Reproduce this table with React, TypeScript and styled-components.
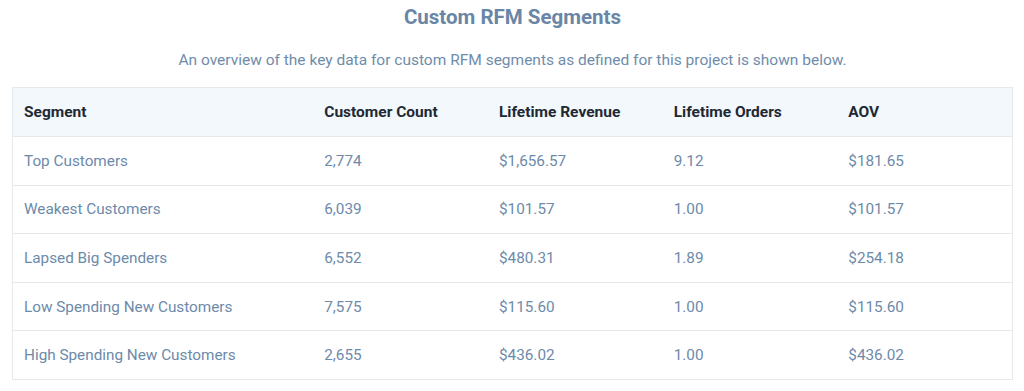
import React from "react";
import styled, { createGlobalStyle } from "styled-components";

const GlobalStyle = createGlobalStyle`
  html, body { margin: 0; padding: 0; background: #ffffff; }
  body { font-family: Roboto, "Noto Sans", Arial, sans-serif; }
`;

const Page = styled.div`
  display: flex;
  flex-direction: column;
  align-items: center;
  padding: 4px 11px 0 12px;
`;

const Title = styled.h2`
  margin: 0;
  font-size: 20.5px;
  line-height: 26px;
  font-weight: 700;
  color: #6986a6;
`;

const Subtitle = styled.p`
  margin: 20px 0 0;
  font-size: 15.5px;
  line-height: 20px;
  color: #6f8cab;
`;

const Table = styled.table`
  margin-top: 17px;
  align-self: stretch;
  border-collapse: collapse;
  table-layout: fixed;
  border: 1px solid #e6e8eb;
`;

const HeadRow = styled.tr`
  background: #f3f8fc;
`;

const Th = styled.th<{ $w: number }>`
  width: ${(p) => p.$w - 24}px;
  text-align: left;
  padding: 0 12px;
  height: 48px;
  font-size: 15.5px;
  font-weight: 700;
  color: #1f2933;
  border-bottom: 1px solid #e6e8eb;
  &:first-child { padding-left: 11px; width: ${(p) => p.$w - 23}px; }
`;

const Row = styled.tr`
  & + & td { border-top: 1px solid #e6e8eb; }
`;

const Td = styled.td`
  padding: 0 12px;
  height: 47.6px;
  font-size: 15.3px;
  color: #6d8aaa;
  &:first-child { padding-left: 11px; }
`;

const cols = [
  { label: "Segment", w: 300 },
  { label: "Customer Count", w: 175 },
  { label: "Lifetime Revenue", w: 175 },
  { label: "Lifetime Orders", w: 175 },
  { label: "AOV", w: 176 },
];

const rows = [
  ["Top Customers", "2,774", "$1,656.57", "9.12", "$181.65"],
  ["Weakest Customers", "6,039", "$101.57", "1.00", "$101.57"],
  ["Lapsed Big Spenders", "6,552", "$480.31", "1.89", "$254.18"],
  ["Low Spending New Customers", "7,575", "$115.60", "1.00", "$115.60"],
  ["High Spending New Customers", "2,655", "$436.02", "1.00", "$436.02"],
];

export default function App() {
  return (
    <>
      <GlobalStyle />
      <Page>
        <Title>Custom RFM Segments</Title>
        <Subtitle>
          An overview of the key data for custom RFM segments as defined for this project is shown below.
        </Subtitle>
        <Table>
          <thead>
            <HeadRow>
              {cols.map((c) => (
                <Th key={c.label} $w={c.w}>
                  {c.label}
                </Th>
              ))}
            </HeadRow>
          </thead>
          <tbody>
            {rows.map((r) => (
              <Row key={r[0]}>
                {r.map((v, i) => (
                  <Td key={i}>{v}</Td>
                ))}
              </Row>
            ))}
          </tbody>
        </Table>
      </Page>
    </>
  );
}
